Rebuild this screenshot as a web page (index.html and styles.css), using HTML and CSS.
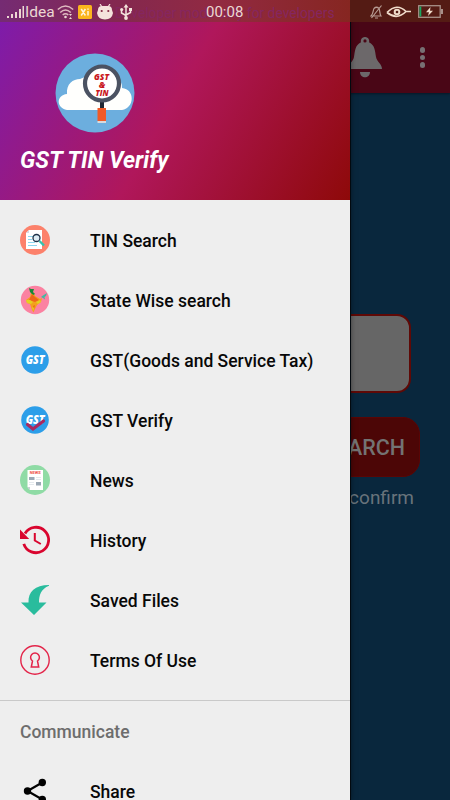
FILE: index.html
```html
<!DOCTYPE html>
<html lang="en">
<head>
<meta charset="utf-8">
<title>GST TIN Verify</title>
<link rel="stylesheet" href="styles.css">
</head>
<body>
<div class="screen">
  <main class="app">
    <header class="toolbar">
      <svg class="bell" width="34" height="42" viewBox="0 0 34 42"><path fill="#6c686a" fill-rule="evenodd" d="M17 0a4 4 0 0 1 4 5.200C27 8 27 14 28 20C29 25 34 27 34 32H0C0 27 5 25 6 20C7 14 7 8 13 5.200A4 4 0 0 1 17 0ZM17 2.300a1.600 1.600 0 1 0 0 3.200a1.600 1.600 0 0 0 0-3.200ZM12 35H22C22 42 12 42 12 35Z"/></svg>
      <div class="more"><i></i><i></i><i></i></div>
    </header>
    <div class="field"></div>
    <div class="search">SEARCH</div>
    <div class="hint">Please confirm</div>
  </main>

  <aside class="drawer">
    <div class="head">
      <svg class="logo" width="80" height="80" viewBox="0 0 80 80">
        <circle cx="40" cy="40" r="39.500" fill="#6caede"/>
        <path fill="#fffffd" d="M12 57C1 55 1 42 12 41C11 31 18 26 25 26L40 20L60 24C67 27 67 32 67 35C80 36 80 55 67 57Z"/>
        <rect x="45" y="47" width="4" height="8" fill="#202733"/>
        <circle cx="47" cy="30.500" r="17" fill="#fff" stroke="#4b5262" stroke-width="4.200"/>
        <rect x="42.500" y="55" width="8.500" height="13" fill="#f05a28"/>
        <rect x="42.500" y="68" width="8.500" height="2" fill="#d8d9dc"/>
        <g class="lens" text-anchor="middle" fill="#c9151b"><text x="46.500" y="26.800" textLength="15" lengthAdjust="spacingAndGlyphs">GST</text><text x="47" y="34.700">&amp;</text><text x="47" y="42.700" textLength="13" lengthAdjust="spacingAndGlyphs">TIN</text></g>
      </svg>
      <h1>GST TIN Verify</h1>
    </div>
    <nav class="menu">
      <a class="item"><svg width="30" height="30" viewBox="0 0 30 30"><circle cx="15" cy="15" r="15" fill="#fc816b"/><path fill="#fff" d="M9 5H22V24H6V8Z"/><path fill="#d5dce5" d="M9 5V8H6Z"/><path d="M8 11.500H14M8 14.500H12M8 17.500H15M8 20.500H17" stroke="#8fd6ee" stroke-width="1"/><circle cx="16.500" cy="13" r="3.500" fill="#dcecf4" stroke="#1e3148" stroke-width="1.300"/><path d="M19.500 16L24 20.500" stroke="#36c2ae" stroke-width="2.400"/></svg><span>TIN Search</span></a>
      <a class="item"><svg width="30" height="30" viewBox="0 0 30 30"><circle cx="15" cy="15" r="14.200" fill="#fb82a1"/><path fill="#f2a11c" d="M11 8L14 8L15 11L20 14L22 13L21 17L17 20L15 24L13.500 27.500L12 25L10 19L7 18L6 15L10 12Z"/><path fill="#168a38" d="M9 3L11 4L14 4L13 7L15 9L13 10L10 7Z"/><path fill="#ee641c" d="M12 9L15 12L19 15L15 17L9 15ZM13 21L15 20L14 24Z"/><path fill="#e3cf20" d="M6 15L10 15L13 17L11 19L7 18ZM16 17L20 15L21 17L18 19ZM12 22L14 23L13 26Z"/><path fill="#41b9a2" d="M21 12L23 10.500L27 8L26 11L24.500 12L25 14.500L23 13Z"/></svg><span>State Wise search</span></a>
      <a class="item"><svg width="30" height="30" viewBox="0 0 30 30"><circle cx="15" cy="15" r="13.800" fill="#2c9ee9"/><text class="gst" x="15.200" y="18.600" text-anchor="middle" textLength="19" lengthAdjust="spacingAndGlyphs">GST</text></svg><span>GST(Goods and Service Tax)</span></a>
      <a class="item"><svg width="30" height="30" viewBox="0 0 30 30"><circle cx="15" cy="15" r="13.800" fill="#2c9ee9"/><text class="gst" x="15.200" y="18.600" text-anchor="middle" textLength="19" lengthAdjust="spacingAndGlyphs">GST</text><path d="M7.500 19.500L13 24L23.500 16" fill="none" stroke="#a82960" stroke-width="3.200" stroke-linecap="round"/></svg><span>GST Verify</span></a>
      <a class="item"><svg width="30" height="30" viewBox="0 0 30 30"><circle cx="15" cy="15" r="15" fill="#8fdba5"/><path fill="#fff" d="M7.500 5H23V25H10L7.500 22Z"/><path fill="#c8ced5" d="M7.500 22H10V25Z"/><text class="news" x="15.200" y="9.200" text-anchor="middle" textLength="11" lengthAdjust="spacingAndGlyphs">NEWS</text><path fill="#9ba8b5" d="M9 12H14.500V15H9ZM16 17H21V20.500H16Z"/><path d="M16 12.500H21M16 14.500H21M9 17.500H14M9 19.500H14" stroke="#e4e9ed"/></svg><span>News</span></a>
      <a class="item"><svg width="30" height="30" viewBox="0 0 30 30"><path d="M5 8.500A12.700 12.700 0 1 1 3.800 18.800" fill="none" stroke="#d9052e" stroke-width="2.800"/><path fill="#d9052e" d="M0 4.500V14H9.200Z"/><path d="M14.800 8V15.500L20.800 19" fill="none" stroke="#d9052e" stroke-width="2"/></svg><span>History</span></a>
      <a class="item"><svg width="30" height="30" viewBox="0 0 30 30"><path fill="#29bc9d" d="M1 17.500H8.500C8 7 15 0 29 0V.8C21 4 19 10 19 17.500H26.500L14 30Z"/></svg><span>Saved Files</span></a>
      <a class="item"><svg width="30" height="30" viewBox="0 0 30 30"><g fill="none" stroke="#e32449"><circle cx="15" cy="15" r="14.200" stroke-width="1.400"/><path stroke-width="1.500" d="M12.500 16A4.400 4.400 0 1 1 17.500 16L18.700 22H11.300L12.500 16Z"/></g></svg><span>Terms Of Use</span></a>
    </nav>
    <section class="communicate">
      <h2>Communicate</h2>
      <a class="item"><svg width="30" height="30" viewBox="0 0 30 30"><path d="M22.300 6.500L7.500 15L22.300 23.500" fill="none" stroke="#000" stroke-width="2.200"/><circle cx="22.300" cy="6.500" r="3.700"/><circle cx="7.500" cy="15" r="3.700"/><circle cx="22.300" cy="23.500" r="3.700"/></svg><span>Share</span></a>
    </section>
  </aside>

  <div class="status">
    <div class="ghost">Developer mode only for developers</div>
    <svg class="signal" width="18" height="12" viewBox="0 0 18 12"><path fill="#ecd8d3" d="M0 10H2V12H0ZM4 8H6V12H4ZM8 6H10V12H8ZM12 3H14V12H12ZM15.500 0H17V12H15.500Z"/></svg>
    <span class="carrier">Idea</span>
    <svg class="wifi" width="17" height="14" viewBox="0 0 17 14"><g fill="none" stroke="#dfbac0" stroke-width="1.500"><path d="M.8 4.500Q8.500-2.500 16.200 4.500M3.200 7.500Q8.500 2.500 13.800 7.500M5.700 10Q8.500 7.500 11.300 10"/></g><circle cx="8.500" cy="12" r="1.300" fill="#ecd8d3"/><path fill="#ecd8d3" d="M12 9H15L13.500 11ZM12 14H15L13.500 12Z"/></svg>
    <svg class="xi" width="14" height="14" viewBox="0 0 14 14"><rect width="14" height="14" rx="1.500" fill="#fbb51d"/><path d="M3.200 4L7.400 10.500M7.400 4L3.200 10.500M10 6V10.500M10 3.500V4.800" stroke="#fff3dc" stroke-width="1.500"/></svg>
    <svg class="droid" width="16" height="16" viewBox="0 0 16 16"><path d="M3 0L5 3M13 0L11 3" stroke="#f4e3dc" stroke-width="1.200"/><path fill="#f4e3dc" d="M1 6Q1 2 5 2H11Q15 2 15 6L16 9Q15 15.500 8 15.500Q1 15.500 0 9Z"/><circle cx="4.700" cy="7" r="1.100" fill="#842943"/><circle cx="11.300" cy="7" r="1.100" fill="#842943"/></svg>
    <svg class="usb" width="12" height="16" viewBox="0 0 12 16"><path d="M6 2V14M1.500 6V9L6 11.500M10.500 5.500V8.500L6 11" fill="none" stroke="#f4e3dc" stroke-width="1.500"/><path fill="#f4e3dc" d="M6 0L8.500 3.500H3.500ZM9 4H12V7H9Z"/><circle cx="1.700" cy="5.500" r="1.600" fill="#f4e3dc"/><circle cx="6" cy="14" r="1.900" fill="#f4e3dc"/></svg>
    <span class="clock">00:08</span>
    <svg class="mute" width="13" height="14" viewBox="0 0 13 14"><path d="M1 11H11C9.500 9 10 5 9 3.500Q6.500 1 4 3.500C3 5 3.500 9 1 11ZM5 13H8M11.500 .5L1.500 13" fill="none" stroke="#b79c93" stroke-width="1.200"/></svg>
    <svg class="eye" width="25" height="12" viewBox="0 0 25 12"><path d="M1 6.500Q11-3.500 20 5.500L25 5.500M1 6.500Q11 14.500 20 5.500" fill="none" stroke="#f0dccb" stroke-width="1.700"/><circle cx="11" cy="6" r="3.300" fill="#f0dccb"/><circle cx="11" cy="6" r="1.300" fill="#541c15"/></svg>
    <svg class="battery" width="25" height="13" viewBox="0 0 25 13"><rect x=".7" y=".7" width="21.500" height="11.600" fill="none" stroke="#a89088" stroke-width="1.300"/><path fill="#a89088" d="M23 4H25V9H23Z"/><path fill="#19a760" d="M1.500 1.500H3.300V11.500H1.500Z"/><path fill="#f0dccb" d="M12.500 2L8 7.200H11L10 11L15 5.800H12Z"/></svg>
  </div>
</div>
</body>
</html>
```

FILE: styles.css
```css
* { box-sizing: border-box; }

body {
  margin: 0;
  font-family: Roboto, "Liberation Sans", sans-serif;
}

.screen {
  position: relative;
  width: 450px;
  height: 800px;
  overflow: hidden;
  background: #09273d;
}

.app {
  display: flex;
  flex-direction: column;
  align-items: flex-end;
  height: 800px;
}

.toolbar {
  display: flex;
  align-items: flex-start;
  justify-content: flex-end;
  width: 100%;
  height: 93px;
  padding: 37px 25px 0 0;
  background: #490616;
  box-shadow: 0 1px 2px #061827;
}

.more {
  display: grid;
  gap: 2px;
  margin: 10px 0 0 38px;
}

.more i {
  width: 5.500px;
  height: 5.500px;
  border-radius: 50%;
  background: #777073;
}

.field {
  width: 372px;
  height: 79px;
  margin: 221px 39px 0 0;
  border: 2.500px solid #5f0906;
  border-radius: 14px;
  background: #666;
}

.search {
  width: 390px;
  height: 60px;
  margin: 24px 30px 0 0;
  padding-right: 14px;
  border: 1px solid #5a0505;
  border-radius: 17px;
  background: #4c0606;
  color: #737373;
  font-size: 21.500px;
  font-weight: 500;
  line-height: 60px;
  text-align: right;
}

.hint {
  margin: 8px 36px 0 0;
  color: #68737b;
  font-size: 19px;
  line-height: 26px;
}

.drawer {
  position: absolute;
  top: 0;
  left: 0;
  width: 350px;
  height: 800px;
  overflow: hidden;
  background: #eee;
  box-shadow: 1px 0 0 #02090f, 0 0 6px rgba(0, 0, 0, .6);
}

.head {
  height: 200px;
  padding: 53px 20px 0;
  background: linear-gradient(119.700deg, #7b1cae 0%, #b0175b 50%, #8e0909 100%);
}

.logo {
  display: block;
  margin-left: 35px;
}

.lens {
  font: italic 800 8.500px "Open Sans", sans-serif;
}

h1 {
  margin: 14px 0 0;
  color: #fff;
  font-size: 23px;
  font-style: italic;
  font-weight: 700;
  line-height: 28px;
  white-space: nowrap;
}

.menu {
  height: 501px;
  padding-top: 10px;
  border-bottom: 1px solid #c9c9c9;
}

.item {
  display: flex;
  align-items: center;
  gap: 40px;
  height: 60px;
  padding-left: 20px;
  color: #080808;
  font-size: 17.500px;
  font-weight: 500;
  line-height: 22px;
  white-space: nowrap;
}

.item span {
  padding-top: 2px;
}

.gst {
  fill: #fff;
  font: italic 800 11.500px "Open Sans", sans-serif;
}

.news {
  fill: #ef5147;
  font: 700 4px Roboto, sans-serif;
}

h2 {
  margin: 0;
  padding: 20px 20px 18px;
  color: #6d6d6d;
  font-size: 17.500px;
  font-weight: 500;
  line-height: 22px;
}

.status {
  position: absolute;
  top: 0;
  left: 0;
  display: flex;
  align-items: center;
  width: 450px;
  height: 22px;
  padding: 1px 7px 0;
  background: linear-gradient(90deg, #752b73 0, #84284f 120px, #922a41 220px, #862621 350px, #541b14 350px);
  color: #ecd8d3;
}

.status svg { flex: none; }

.ghost {
  position: absolute;
  top: 4px;
  left: 115px;
  width: 222px;
  color: #852660;
  font-size: 13.800px;
  line-height: 18px;
  white-space: nowrap;
}

.carrier, .clock {
  position: relative;
  font-size: 15.500px;
  line-height: 20px;
}

.carrier { width: 31px; margin-left: 0; }
.wifi { margin-left: 1px; }
.xi { margin-left: 4px; }
.droid { margin-left: 5px; }
.usb { position: relative; margin-left: 7px; }
.clock { width: 40px; margin-left: 74px; font-size: 15px; }
.mute { margin-left: auto; }
.eye { margin-left: 3px; }
.battery { margin-left: 7px; }
```
